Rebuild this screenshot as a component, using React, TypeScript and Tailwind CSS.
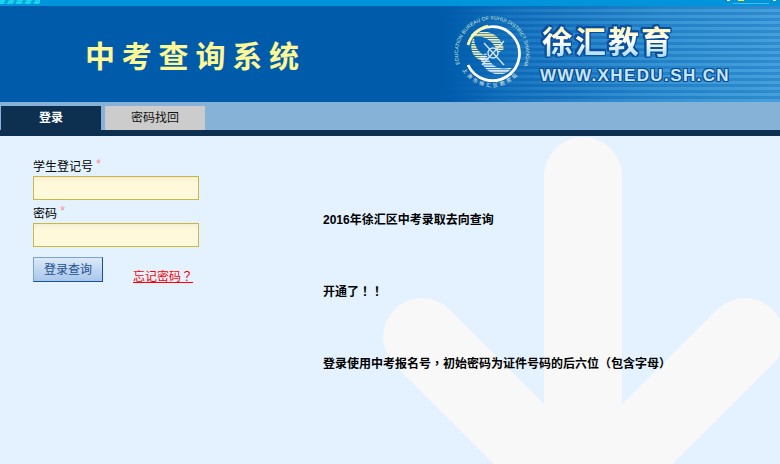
import React from "react";

const cjk = "font-['Liberation_Sans','Noto_Sans_CJK_SC',sans-serif]";

function Punct({ children }: { children: React.ReactNode }) {
  return <span className="leading-[0px] font-['Noto_Sans_CJK_TC',sans-serif]">{children}</span>;
}

function Logo() {
  return (
    <svg width="76" height="76" viewBox="0 0 76 76" className="shrink-0 overflow-visible">
      <defs>
        <path id="ringText" d="M6 50 A34 34 0 1 1 70 50" fill="none" />
        <path id="ringBottom" d="M8 54 A34 34 0 0 0 68 54" fill="none" />
        <pattern id="bands" width="3" height="2.4" patternUnits="userSpaceOnUse">
          <rect width="3" height="1.5" fill="#fff7b0" />
        </pattern>
        <pattern id="bandsWhite" width="3" height="2.4" patternUnits="userSpaceOnUse">
          <rect width="3" height="1.5" fill="#e8f4ff" />
        </pattern>
      </defs>
      <text fill="#d8ecd0" fontSize="5.1" fontFamily="Liberation Sans">
        <textPath href="#ringText" startOffset="1">EDUCATION BUREAU OF XUHUI DISTRICT SHANGHAI</textPath>
      </text>
      <text fill="#e8f0e0" fontSize="5" fontFamily="Noto Sans CJK SC" letterSpacing="2.4">
        <textPath href="#ringBottom" startOffset="1">上海市徐汇区教育局</textPath>
      </text>
      <path d="M18 21 A27 27 0 1 1 14 50" fill="none" stroke="#ffffff" strokeWidth="2.8" />
      <path d="M14 30 A27 27 0 0 1 34 11" fill="none" stroke="#fff6a0" strokeWidth="2.8" />
      <path d="M19 22 C26 12 46 16 50 34 L44 38 C40 26 30 20 19 22Z" fill="url(#bands)" />
      <path d="M20 22 C14 32 18 44 30 46 L32 41 C24 38 20 30 20 22Z" fill="url(#bands)" />
      <path d="M58 52 C52 64 30 62 26 42 L32 38 C36 52 46 56 58 52Z" fill="url(#bandsWhite)" />
      <g fill="none" stroke="#cfe6fa" strokeWidth="1.4">
        <path d="M28 50 L50 26" />
        <path d="M30 28 L50 50" />
        <circle cx="39" cy="38" r="5" />
      </g>
    </svg>
  );
}

function Arrow() {
  return (
    <svg
      width="780"
      height="328"
      viewBox="0 136 780 328"
      className="absolute left-0 top-0 pointer-events-none"
    >
      <g fill="none" stroke="#f8f8f8" strokeWidth="78" strokeLinecap="round">
        <path d="M583 176 L583 520" />
        <path d="M422 337 L583 498 L745 337" strokeLinejoin="round" />
      </g>
    </svg>
  );
}

function Field({ label }: { label: string }) {
  return (
    <div className="flex flex-col">
      <label className="text-[12px] leading-[17px] h-[17px] text-black">
        {label} <span className="relative -top-[3px] text-[#ff8a8a] text-[12px]">*</span>
      </label>
      <div className="w-[166px] h-[24px] border border-[#cdb73f] bg-[linear-gradient(#f6efd4_0,#fff9dc_6px,#fff9dc_100%)]" />
    </div>
  );
}

export default function App() {
  return (
    <div className={`w-[780px] h-[464px] overflow-hidden flex flex-col bg-[#e3f2fe] ${cjk}`}>
      <div className="h-[6px] bg-[#0095da] flex justify-between shrink-0">
        <div className="w-[40px] h-[4px] bg-[repeating-linear-gradient(115deg,#19d3ee_0,#19d3ee_5px,#0aa6dc_5px,#0aa6dc_8px)]" />
        <div className="flex items-start gap-[3px] mr-[4px]">
          <div className="w-[3px] h-px bg-white" />
          <div className="w-[36px] h-[4px] border-b border-[#50b4e4] pl-[5px]">
            <div className="w-[6px] h-px bg-[#ffee33]" />
          </div>
          <div className="w-[3px] h-px bg-white ml-px" />
        </div>
      </div>

      <header className="relative h-[96px] shrink-0 flex bg-[linear-gradient(90deg,#005bab_0,#005bab_57%,#0f6fbd_65%,#2b8fd2_85%,#3a9ada_100%)]">
        <div className="absolute inset-y-0 right-0 w-[330px] bg-[repeating-linear-gradient(180deg,rgba(0,60,140,0.16)_0,rgba(0,60,140,0.16)_3px,rgba(255,255,255,0.06)_3px,rgba(255,255,255,0.06)_6px)] [mask-image:linear-gradient(90deg,transparent,black_30%)]" />
        <div className="w-[430px] flex items-center shrink-0 pl-[85px]">
          <h1 className="mt-[6px] text-[30px] leading-[36px] tracking-[6.8px] font-bold text-[#fdf795] whitespace-nowrap">
            中考查询系统
          </h1>
        </div>
        <div className="relative flex-1 flex items-start pl-[24px]">
          <div className="mt-[9px] mr-[11px]">
            <Logo />
          </div>
          <div className="flex flex-col pt-[18px]">
            <div className="ml-[1px] h-[38px] text-[31px] leading-[38px] font-bold tracking-[2px] whitespace-nowrap text-transparent bg-clip-text bg-[linear-gradient(180deg,#fff3a0_0,#ffffff_45%,#8fd0f8_100%)] [filter:drop-shadow(1.5px_0_0_#0a4f9e)_drop-shadow(-1.5px_0_0_#0a4f9e)_drop-shadow(0_1.5px_0_#0a4f9e)_drop-shadow(0_-1.5px_0_#0a4f9e)]">
              徐汇教育
            </div>
            <div className="mt-[5px] -ml-[1px] text-[17px] leading-[18px] font-bold tracking-[1.4px] text-[#c4e8fb] whitespace-nowrap [font-family:'Liberation_Sans',sans-serif] [text-shadow:1px_0_0_#0a4a96,-1px_0_0_#0a4a96,0_1px_0_#0a4a96,0_-1px_0_#0a4a96,1px_1px_0_#0a4a96,-1px_-1px_0_#0a4a96,1px_-1px_0_#0a4a96,-1px_1px_0_#0a4a96]">
              WWW.XHEDU.SH.CN
            </div>
          </div>
        </div>
      </header>

      <nav className="h-[28px] shrink-0 bg-[#85b2d6] flex items-end gap-[4px] pl-px">
        <div className="w-[100px] h-[24px] bg-[#0d3050] text-white text-[12px] font-bold flex items-center justify-center">
          登录
        </div>
        <div className="w-[100px] h-[24px] bg-[#cccccc] text-[#111] text-[12px] flex items-center justify-center">
          密码找回
        </div>
      </nav>
      <div className="h-[6px] shrink-0 bg-[#0d3050]" />

      <main className="relative flex-1 flex">
        <Arrow />
        <section className="relative w-[323px] shrink-0 pl-[33px] pt-[23px]">
          <div className="flex flex-col gap-[6px]">
            <Field label="学生登记号" />
            <Field label="密码" />
          </div>
          <div className="flex items-end mt-[10px]">
            <button className="w-[70px] h-[25px] border border-[#7aa3d8] border-r-[#1c4f9c] border-b-[#1c4f9c] bg-[linear-gradient(#dce9f8,#a9c6ea)] text-[#1d4f93] text-[12px]">
              登录查询
            </button>
            <a className="ml-[30px] -mb-[2px] text-[12px] leading-[14px] text-[#ff0000] underline">
              忘记密码<Punct>{"\uFF1F"}</Punct>
            </a>
          </div>
        </section>
        <section className="relative flex-1 pt-[76px] flex flex-col gap-[55px] text-[12px] leading-[17px] font-bold text-black">
          <p>2016年徐汇区中考录取去向查询</p>
          <p>开通了<Punct>{"\uFF01\uFF01"}</Punct></p>
          <p>
            登录使用中考报名号<Punct>{"\uFF0C"}</Punct>初始密码为证件号码的后六位<Punct>{"\uFF08"}</Punct>包含字母<Punct>{"\uFF09"}</Punct>
          </p>
        </section>
      </main>
    </div>
  );
}
